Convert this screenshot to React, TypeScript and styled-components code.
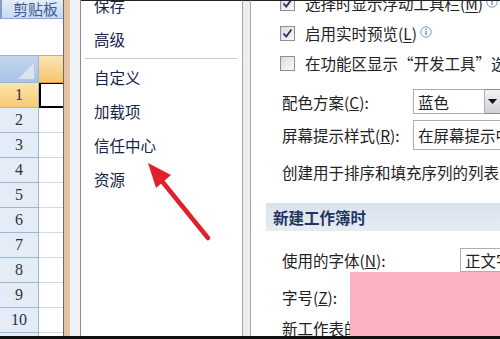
import React from 'react'
import styled, { createGlobalStyle } from 'styled-components'

const cjk = `"Noto Sans CJK SC", "Noto Sans", sans-serif`

const Global = createGlobalStyle`
  html, body {
    margin: 0;
    padding: 0;
    background: #fff;
  }
`

const rows = [1, 2, 3, 4, 5, 6, 7, 8, 9, 10, 11]

const App = () => {
  return (
    <Root>
      <Global />
      <Sheet>
        <RibbonGroup>剪贴板</RibbonGroup>
        <FormulaGap />
        <HeadRow>
          <Corner />
          <ColHead />
        </HeadRow>
        {rows.map((n) => (
          <Row key={n}>
            <RowHead active={n === 1}>{n}</RowHead>
            <Cell active={n === 1} />
          </Row>
        ))}
      </Sheet>
      <Frame />
      <Nav>
        <NavItem>保存</NavItem>
        <NavItem>高级</NavItem>
        <Sep />
        <NavItem>自定义</NavItem>
        <NavItem>加载项</NavItem>
        <NavItem>信任中心</NavItem>
        <NavItem>资源</NavItem>
      </Nav>
      <Gap />
      <Content>
        <CheckRow first>
          <Check checked />
          <CheckText>选择时显示浮动工具栏(<u>M</u>)</CheckText>
          <Info />
        </CheckRow>
        <CheckRow>
          <Check checked />
          <CheckText>启用实时预览(<u>L</u>)</CheckText>
          <Info />
        </CheckRow>
        <CheckRow>
          <Check />
          <CheckText>在功能区显示“开发工具”选项卡(<u>D</u>)</CheckText>
        </CheckRow>
        <FieldRow top={11} height={25}>
          <Label width={133}>配色方案(<u>C</u>):</Label>
          <Select width={72}>蓝色</Select>
          <DropBtn>
            <svg width="9" height="5" viewBox="0 0 9 5">
              <path d="M0 0 H9 L4.5 5 Z" fill="#111" />
            </svg>
          </DropBtn>
        </FieldRow>
        <FieldRow top={6} height={30}>
          <Label width={133}>屏幕提示样式(<u>R</u>):</Label>
          <Select width={140}>在屏幕提示中显示功能说明</Select>
        </FieldRow>
        <FieldRow top={10} height={24}>
          <Label>创建用于排序和填充序列的列表时使用此列表(<u>O</u>):</Label>
        </FieldRow>
        <Section>新建工作簿时</Section>
        <FieldRow top={17} height={24}>
          <Label width={180}>使用的字体(<u>N</u>):</Label>
          <Select width={120}>正文字体</Select>
        </FieldRow>
        <FieldRow top={13} height={24}>
          <Label width={180}>字号(<u>Z</u>):</Label>
          <Select width={60}>11</Select>
        </FieldRow>
        <FieldRow top={7} height={24}>
          <Label>新工作表的默认视图(<u>V</u>):</Label>
        </FieldRow>
      </Content>
      <Pink />
      <Arrow width="500" height="339" viewBox="0 0 500 339">
        <line x1="161" y1="180" x2="208" y2="238" stroke="#e0202c" strokeWidth="4.5" strokeLinecap="round" />
        <polygon points="148,163 171,175 156,188" fill="#e0202c" />
      </Arrow>
    </Root>
  )
}

const Check = ({ checked }: { checked?: boolean }) => (
  <Box>
    {checked && (
      <svg width="11" height="11" viewBox="0 0 11 11">
        <path d="M1.5 5.5 L4.2 8.5 L9.5 1.5" fill="none" stroke="#1d3563" strokeWidth="1.8" />
      </svg>
    )}
  </Box>
)

const Info = () => (
  <InfoIcon width="12" height="12" viewBox="0 0 12 12">
    <circle cx="6" cy="6" r="5.2" fill="#fff" stroke="#6f9ad6" strokeWidth="1" />
    <rect x="5.4" y="5" width="1.2" height="4" fill="#4f7fc4" />
    <circle cx="6" cy="3.4" r="0.8" fill="#4f7fc4" />
  </InfoIcon>
)

export default App

const Root = styled.div`
  width: 500px;
  height: 339px;
  position: relative;
  overflow: hidden;
  display: flex;
  background: #fff;
  border-bottom: 3px solid #111;
  box-sizing: border-box;
  font-family: ${cjk};
`
const Sheet = styled.div`
  width: 64px;
  flex-shrink: 0;
  display: flex;
  flex-direction: column;
  border-right: 1px solid #6b6b6b;
  box-sizing: border-box;
  overflow: hidden;
`
const RibbonGroup = styled.div`
  height: 18px;
  line-height: 18px;
  flex-shrink: 0;
  background: linear-gradient(#e4edf9, #c8d9ef);
  border-bottom: 1px solid #8eaad0;
  border-left: 2px solid #7f9dc7;
  padding-left: 11px;
  font-size: 15px;
  color: #3b5b8f;
  white-space: nowrap;
`
const FormulaGap = styled.div`
  height: 36px;
  flex-shrink: 0;
  background: #fff;
  border-bottom: 1px solid #9ab3d3;
`
const HeadRow = styled.div`
  height: 27px;
  flex-shrink: 0;
  display: grid;
  grid-template-columns: 39px 1fr;
`
const Corner = styled.div`
  position: relative;
  background: linear-gradient(#c3d5ee, #a8c2e6);
  border-right: 1px solid #9eb6ce;
  border-bottom: 1px solid #9eb6ce;
  &::after {
    content: '';
    position: absolute;
    right: 4px;
    bottom: 3px;
    width: 16px;
    height: 16px;
    background: #dde3ec;
    clip-path: polygon(100% 0, 100% 100%, 0 100%);
  }
`
const ColHead = styled.div`
  background: linear-gradient(#fbe4b4, #f5c66e);
  border-bottom: 1px solid #d9a046;
`
const Row = styled.div`
  height: 25px;
  flex-shrink: 0;
  display: grid;
  grid-template-columns: 39px 1fr;
`
const RowHead = styled.div<{ active?: boolean }>`
  background: ${(p) => (p.active ? 'linear-gradient(#fde3ad, #f8c973)' : '#e4ecf7')};
  border-right: 1px solid #9eb6ce;
  border-bottom: 1px solid #9eb6ce;
  box-sizing: border-box;
  display: flex;
  align-items: center;
  justify-content: center;
  font-family: "Liberation Serif", serif;
  font-size: 16px;
  color: #333;
`
const Cell = styled.div<{ active?: boolean }>`
  box-sizing: border-box;
  background: #fff;
  border-bottom: ${(p) => (p.active ? '2px solid #000' : '1px solid #d0d7e5')};
  border-left: ${(p) => (p.active ? '2px solid #000' : 'none')};
  border-top: ${(p) => (p.active ? '1px solid #000' : 'none')};
`
const Frame = styled.div`
  width: 17px;
  flex-shrink: 0;
  box-sizing: border-box;
  background: linear-gradient(to right, #e3c3a5 0 6px, #f1f2f4 6px);
  border-right: 1px solid #8d8d8d;
`
const Nav = styled.div`
  width: 162px;
  flex-shrink: 0;
  box-sizing: border-box;
  border-right: 1px solid #a5a5a5;
  border-top: 1px solid #222;
  background: #fff;
  display: flex;
  flex-direction: column;
  padding-top: 0;
  margin-top: 0;
  & > :first-child {
    margin-top: -13px;
  }
`
const NavItem = styled.div`
  height: 34px;
  flex-shrink: 0;
  display: flex;
  align-items: center;
  padding-left: 13px;
  font-size: 15.5px;
  color: #172447;
`
const Sep = styled.div`
  height: 4px;
  flex-shrink: 0;
  margin: 0 5px 0 4px;
  display: flex;
  align-items: center;
  &::before {
    content: '';
    flex: 1;
    height: 1px;
    background: #c5c9cf;
  }
`
const Gap = styled.div`
  width: 8px;
  flex-shrink: 0;
  box-sizing: border-box;
  background: #eceef1;
  border-right: 1px solid #a5a5a5;
  border-top: 1px solid #222;
`
const Content = styled.div`
  flex: 1;
  min-width: 0;
  overflow: hidden;
  padding-left: 29px;
  display: flex;
  flex-direction: column;
  border-top: 1px solid #222;
  font-size: 15.5px;
  color: #222;
  white-space: nowrap;
`
const CheckRow = styled.div<{ first?: boolean }>`
  height: 30px;
  flex-shrink: 0;
  display: flex;
  align-items: center;
  margin-top: ${(p) => (p.first ? '-13px' : '0')};
`
const Box = styled.div`
  width: 15px;
  height: 15px;
  flex-shrink: 0;
  box-sizing: border-box;
  border: 1px solid #8f8f8f;
  background: linear-gradient(135deg, #d9dadc, #fbfbfb);
  display: flex;
  align-items: center;
  justify-content: center;
`
const CheckText = styled.span`
  margin-left: 10px;
  & u {
    text-underline-offset: 2px;
  }
`
const InfoIcon = styled.svg`
  flex-shrink: 0;
  margin-left: 3px;
  margin-top: -3px;
`
const FieldRow = styled.div<{ top: number; height: number }>`
  margin-top: ${(p) => p.top}px;
  height: ${(p) => p.height}px;
  flex-shrink: 0;
  display: flex;
  align-items: center;
`
const Label = styled.div<{ width?: number }>`
  width: ${(p) => (p.width ? `${p.width}px` : 'auto')};
  flex-shrink: 0;
  box-sizing: border-box;
  padding-left: 2px;
`
const Select = styled.div<{ width: number }>`
  width: ${(p) => p.width}px;
  height: 100%;
  flex-shrink: 0;
  box-sizing: border-box;
  border: 1px solid #abadb3;
  background: #fff;
  display: flex;
  align-items: center;
  padding-left: 4px;
  overflow: hidden;
`
const DropBtn = styled.div`
  width: 16px;
  height: 100%;
  flex-shrink: 0;
  box-sizing: border-box;
  border: 1px solid #8a8d92;
  border-left: none;
  background: linear-gradient(#f2f2f2, #cfd1d4);
  display: flex;
  align-items: center;
  justify-content: center;
`
const Section = styled.div`
  margin-top: 19px;
  margin-left: -14px;
  height: 28px;
  flex-shrink: 0;
  display: flex;
  align-items: center;
  padding-left: 7px;
  background: linear-gradient(#dae2ec, #e7ecf2);
  font-weight: bold;
  color: #1e3564;
`
const Pink = styled.div`
  position: absolute;
  left: 350px;
  top: 272px;
  width: 150px;
  height: 64px;
  background: #fcb1c3;
`
const Arrow = styled.svg`
  position: absolute;
  left: 0;
  top: 0;
  pointer-events: none;
`
